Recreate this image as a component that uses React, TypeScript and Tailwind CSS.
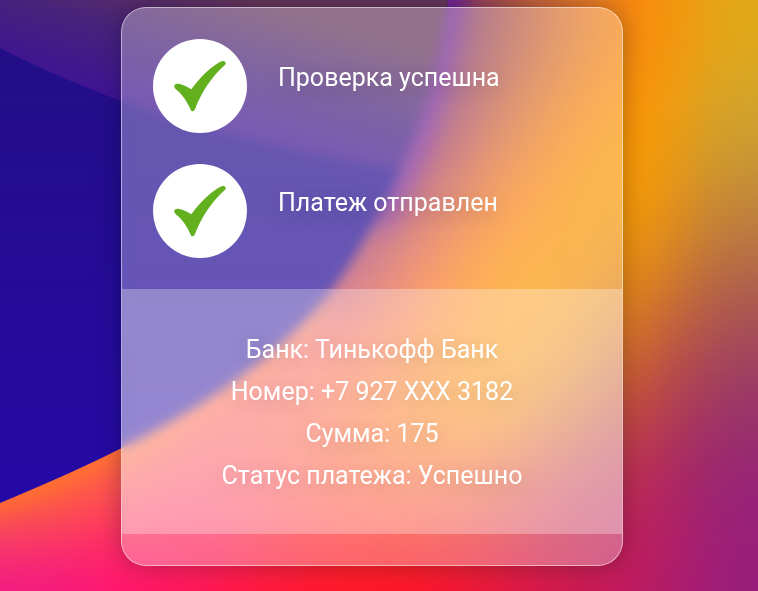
const MESH_W = 76;
const MESH_H = 74;

/* Warm side of the wallpaper, one row of tiles per line, blurred into a smooth mesh */
const MESH = [
  ["#5a2390", "#5a2390", "#5a2390", "#5a2390", "#5a2390", "#64238c", "#a24c4c", "#e27730", "#ff8c05", "#e1a819"],
  ["#5a2390", "#5a2390", "#5a2390", "#5a2390", "#5a2390", "#7e297e", "#c66245", "#fb8613", "#ff9a00", "#cfa52e"],
  ["#5a2390", "#5a2390", "#5a2390", "#5a2390", "#6e2882", "#aa3e62", "#f87729", "#fe9600", "#f89c04", "#c48f38"],
  ["#823c82", "#823c82", "#823c82", "#823c82", "#963c78", "#f8693e", "#fe9405", "#fe9805", "#e69014", "#b66c46"],
  ["#fb5a55", "#fb5a55", "#fb5a55", "#fb5a55", "#fb5a55", "#fb7a28", "#fe9800", "#f7960f", "#cc6830", "#a54b58"],
  ["#ff7832", "#ff7832", "#fd5a50", "#fb5550", "#fd6633", "#fe840c", "#fe9600", "#d67029", "#be4044", "#98356a"],
  ["#ff7828", "#ff5a4e", "#fb4864", "#fb4e50", "#fe5228", "#fb5d1f", "#eb5329", "#c23750", "#b92858", "#962476"],
  ["#f52878", "#ff1e6e", "#ff1f66", "#ff2045", "#ff202c", "#fc1f28", "#e61f3e", "#cc1f54", "#be1c5e", "#9a1e7a"],
  ["#f00f8c", "#ff0c6e", "#ff0f50", "#ff0f37", "#ff0f23", "#ff0c2d", "#e60f41", "#cd1650", "#b91664", "#981e7d"],
];

const STEPS = ["Проверка успешна", "Платеж отправлен"];

const DETAILS = [
  { label: "Банк", value: "Тинькофф Банк" },
  { label: "Номер", value: "+7 927 XXX 3182" },
  { label: "Сумма", value: "175" },
  { label: "Статус платежа", value: "Успешно" },
];

function Wallpaper() {
  return (
    <svg
      className="absolute inset-0 h-full w-full"
      viewBox="0 0 758 591"
      preserveAspectRatio="none"
      aria-hidden="true"
    >
      <defs>
        <filter
          id="mesh"
          filterUnits="userSpaceOnUse"
          x="-200"
          y="-200"
          width="1158"
          height="1000"
          colorInterpolationFilters="sRGB"
        >
          <feGaussianBlur stdDeviation="38" />
        </filter>
        <filter
          id="glow"
          filterUnits="userSpaceOnUse"
          x="-100"
          y="-100"
          width="958"
          height="800"
          colorInterpolationFilters="sRGB"
        >
          <feGaussianBlur stdDeviation="10" />
        </filter>
        <linearGradient id="deep" gradientUnits="userSpaceOnUse" x1="0" y1="60" x2="0" y2="500">
          <stop offset="0" stopColor="#230e88" />
          <stop offset="1" stopColor="#2509a6" />
        </linearGradient>
        <linearGradient id="haze" gradientUnits="userSpaceOnUse" x1="150" y1="115" x2="190" y2="-20">
          <stop offset="0" stopColor="#3e1296" />
          <stop offset="0.5" stopColor="#47227c" />
          <stop offset="1" stopColor="#66365a" />
        </linearGradient>
        <clipPath id="wave">
          <path d="M0 0H448C435 90 405 185 333 289C270 365 190 425 0 503Z" />
        </clipPath>
      </defs>
      <g filter="url(#mesh)">
        {MESH.map((row, y) =>
          row.map((fill, x) => {
            // edge tiles run past the frame so the blur has nothing empty to pick up
            const left = x === 0 ? -200 : x * MESH_W;
            const right = x === row.length - 1 ? 958 : (x + 1) * MESH_W;
            const top = y === 0 ? -200 : y * MESH_H;
            const bottom = y === MESH.length - 1 ? 800 : (y + 1) * MESH_H;
            return (
              <rect key={`${x}-${y}`} x={left} y={top} width={right - left + 1} height={bottom - top + 1} fill={fill} />
            );
          }),
        )}
      </g>
      <path
        d="M456 -40C441 90 411 170 376 225"
        fill="none"
        stroke="#6a1eaa"
        strokeWidth="24"
        opacity="0.8"
        filter="url(#glow)"
      />
      <path
        d="M-20 512C190 428 270 365 320 306"
        fill="none"
        stroke="#ff8a14"
        strokeWidth="16"
        opacity="0.4"
        filter="url(#glow)"
      />
      <g clipPath="url(#wave)">
        <rect width="758" height="591" fill="url(#deep)" />
        <path d="M0 0H460V178C300 160 140 120 0 48Z" fill="url(#haze)" />
      </g>
    </svg>
  );
}

function Check() {
  return (
    <span className="flex size-[94px] shrink-0 items-center justify-center rounded-full bg-white">
      <svg className="size-[70px]" viewBox="0 3 210 210" fill="#63b01e" aria-hidden="true">
        <path d="M28 111C26 103 34 100 44 102C57 105 69 112 79 118C100 87 137 50 166 35C173 32 180 32 182 38C183 42 181 44 177 47C136 85 109 128 90 177C87 185 80 186 77 179C67 155 52 133 34 119C31 117 29 114 28 111Z" />
      </svg>
    </span>
  );
}

export default function App() {
  return (
    <main className="relative min-h-screen overflow-hidden pt-[7px] pr-[14px] pb-6 font-['Roboto','Noto_Sans',sans-serif] text-[25px] text-white">
      <Wallpaper />
      <section className="relative mx-auto w-full max-w-[502px] overflow-hidden rounded-[25px] border border-white/50 bg-white/30 pt-[31px] pb-[31px] shadow-[0_0_24px_rgba(8,7,16,0.3)] backdrop-blur-[6px] text-shadow-[0_4px_20px_rgba(0,0,0,0.2)]">
        <ul className="flex flex-col gap-[31px] px-[31px]">
          {STEPS.map((step) => (
            <li key={step} className="flex gap-[31px]">
              <Check />
              <p className="pt-[18px] leading-[42px]">{step}</p>
            </li>
          ))}
        </ul>
        <div className="mt-[31px] bg-white/30 px-8 pt-[40px] pb-[37px] text-center">
          {DETAILS.map(({ label, value }) => (
            <p key={label} className="leading-[42px]">
              {label}: {value}
            </p>
          ))}
        </div>
      </section>
    </main>
  );
}
